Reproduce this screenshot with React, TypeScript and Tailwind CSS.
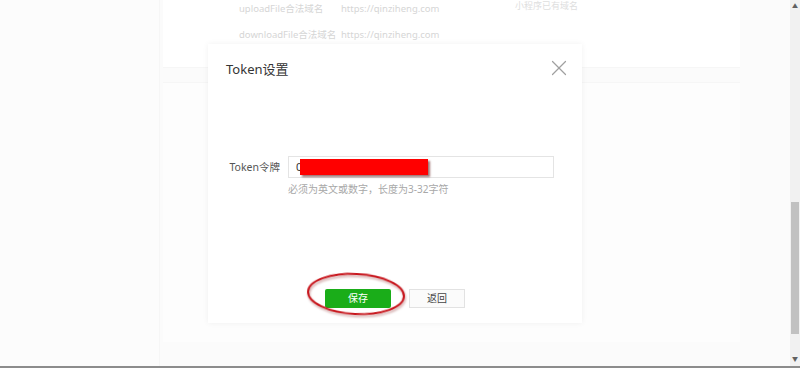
import { X } from 'lucide-react';

const font = { fontFamily: '"Noto Sans", "Noto Sans CJK SC", sans-serif' };

function BackgroundPage() {
  return (
    <div className="flex h-full w-full bg-[#fafafa]">
      <div className="w-[160px] shrink-0 border-r border-[#f3f3f3] bg-[#fbfbfb]" />
      <div className="flex flex-1 flex-col">
        <div className="ml-[3px] mr-[50px] flex h-[68px] flex-col border-b border-[#f2f2f2] bg-white pl-[76px] pr-4">
          <div className="-mt-[4px] flex h-[26px] items-center whitespace-nowrap text-[9.5px] text-[#c4c4c4]">
            <span className="w-[102px]">uploadFile合法域名</span>
            <span className="w-[174px]">https://qinziheng.com</span>
            <span className="-mt-[8px] text-[9px] leading-[11px] text-[#d0d0d0]">小程序已有域名</span>
          </div>
          <div className="flex h-[26px] items-center whitespace-nowrap text-[9.5px] text-[#c4c4c4]">
            <span className="w-[102px]">downloadFile合法域名</span>
            <span>https://qinziheng.com</span>
          </div>
        </div>
        <div className="ml-[3px] mr-[50px] mt-[14px] h-[260px] border-t border-[#f3f3f3] bg-[#fdfdfd]" />
      </div>
    </div>
  );
}

function TokenModal() {
  return (
    <div className="flex h-[279px] w-[374px] flex-col bg-white shadow-[0_0_6px_rgba(0,0,0,0.06)]">
      <div className="flex items-center justify-between pl-[18px] pr-[10px] pt-[13px]">
        <span className="text-[13px] leading-[16px] text-[#353535]">Token设置</span>
        <X size={26} strokeWidth={1.1} className="-mt-[2px] text-[#a0a0a0]" />
      </div>
      <div className="mt-[75px] flex items-start">
        <label className="w-[72px] pt-[4px] text-right text-[10.5px] leading-[14px] text-[#555]">
          Token令牌
        </label>
        <div className="ml-[8px] flex flex-col">
          <div className="relative h-[22px] w-[266px] border border-[#e4e4e4] pl-[7px] text-[11px] leading-[20px] text-[#333]">
            0
            <div className="absolute left-[11px] top-[2px] h-[16px] w-[128px] bg-[#ff0000] shadow-[2px_2px_2px_rgba(80,0,0,0.55)]" />
          </div>
          <span className="mt-[4px] text-[10px] leading-[14px] text-[#a8a8a8]">
            必须为英文或数字，长度为3-32字符
          </span>
        </div>
      </div>
      <div className="mt-auto flex justify-center gap-[18px] pb-[15px]">
        <button className="relative h-[19px] w-[66px] rounded-[2px] bg-[#1aad19] text-[10px] text-white">
          保存
          <svg
            className="pointer-events-none absolute -left-[20px] -top-[17px]"
            width="104"
            height="48"
            viewBox="0 0 104 48"
          >
            <ellipse
              cx="51"
              cy="22"
              rx="48"
              ry="20"
              fill="none"
              stroke="#c8161d"
              strokeWidth="2"
              transform="rotate(3 51 22)"
              style={{ filter: 'drop-shadow(1px 2px 1px rgba(120,0,0,0.35))' }}
            />
          </svg>
        </button>
        <button className="h-[19px] w-[56px] border border-[#e2e2e2] bg-[#fbfbfb] text-[10px] text-[#444]">
          返回
        </button>
      </div>
    </div>
  );
}

function Scrollbar() {
  return (
    <div className="flex w-[10px] shrink-0 flex-col items-center bg-[#f1f1f1]">
      <span className="mt-[2px] text-[6px] leading-[8px] text-[#606060]">▲</span>
      <div className="mt-[192px] h-[132px] w-[8px] bg-[#c1c1c1]" />
      <span className="mt-auto mb-[3px] text-[6px] leading-[8px] text-[#606060]">▼</span>
    </div>
  );
}

export default function App() {
  return (
    <div className="flex h-[368px] w-[800px] flex-col overflow-hidden bg-white" style={font}>
      <div className="flex h-[366px]">
        <div className="relative flex-1">
          <BackgroundPage />
          <div className="absolute inset-0 flex items-center justify-center bg-white/30">
            <TokenModal />
          </div>
        </div>
        <Scrollbar />
      </div>
      <div className="h-[2px] bg-[#8c8c8c]" />
    </div>
  );
}
